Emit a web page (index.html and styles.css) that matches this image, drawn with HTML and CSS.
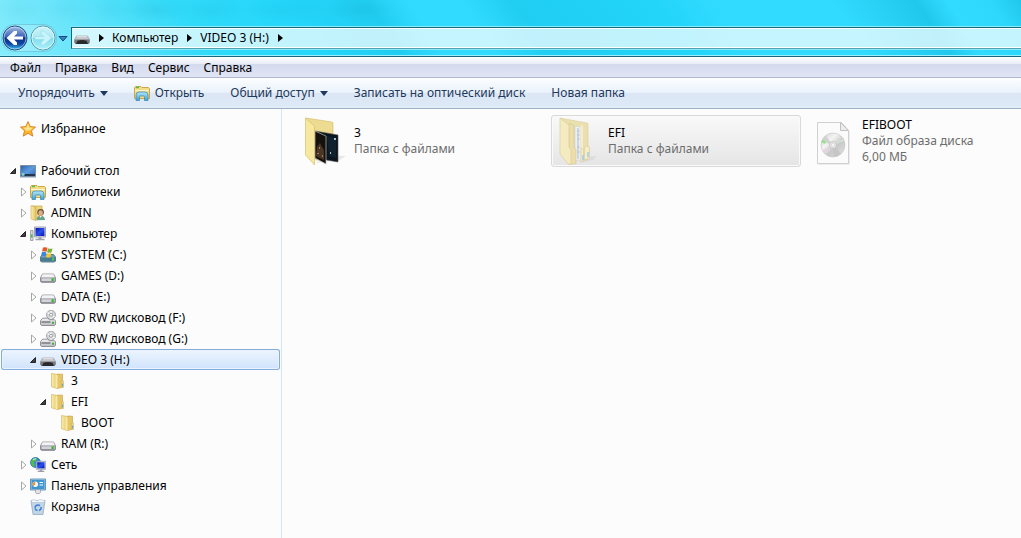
FILE: index.html
```html
<!DOCTYPE html>
<html lang="ru">
<head>
    <meta charset="UTF-8">
    <meta name="viewport" content="width=device-width, initial-scale=1.0">
    <title>VIDEO 3 (H:)</title>
    <link rel="stylesheet" href="styles.css">
</head>
<body>

    <svg class="sprite" aria-hidden="true">
        <defs>
            <linearGradient id="g-back" x1="0" y1="0" x2="0" y2="1">
                <stop offset="0" stop-color="#a9bfe6"/>
                <stop offset="0.45" stop-color="#3a62b8"/>
                <stop offset="0.5" stop-color="#0b2f86"/>
                <stop offset="0.75" stop-color="#0f48a8"/>
                <stop offset="1" stop-color="#35c8f4"/>
            </linearGradient>
            <linearGradient id="g-forward" x1="0" y1="0" x2="0" y2="1">
                <stop offset="0" stop-color="#d0f5fb"/>
                <stop offset="0.48" stop-color="#a9e8f4"/>
                <stop offset="0.52" stop-color="#80dcee"/>
                <stop offset="1" stop-color="#aef2fc"/>
            </linearGradient>
            <linearGradient id="g-folder" x1="0" y1="0" x2="1" y2="0">
                <stop offset="0" stop-color="#fbf0b4"/>
                <stop offset="1" stop-color="#e3c15c"/>
            </linearGradient>
            <linearGradient id="g-drive" x1="0" y1="0" x2="0" y2="1">
                <stop offset="0" stop-color="#f6f6f8"/>
                <stop offset="1" stop-color="#b9bac0"/>
            </linearGradient>
            <linearGradient id="g-blue" x1="0" y1="0" x2="1" y2="1">
                <stop offset="0" stop-color="#2a5ea8"/>
                <stop offset="0.5" stop-color="#5d9be0"/>
                <stop offset="1" stop-color="#2e68b5"/>
            </linearGradient>
            <linearGradient id="g-screen" x1="0" y1="0" x2="1" y2="1">
                <stop offset="0" stop-color="#0a12a0"/>
                <stop offset="0.5" stop-color="#2a50f0"/>
                <stop offset="1" stop-color="#0612a8"/>
            </linearGradient>
            <linearGradient id="g-tray" x1="0" y1="0" x2="0" y2="1">
                <stop offset="0" stop-color="#b5e6f8"/>
                <stop offset="1" stop-color="#3f9fd0"/>
            </linearGradient>
            <linearGradient id="g-disc" x1="0" y1="0" x2="1" y2="1">
                <stop offset="0" stop-color="#d0d0d0"/>
                <stop offset="0.35" stop-color="#f4f4f4"/>
                <stop offset="0.6" stop-color="#c8c8c8"/>
                <stop offset="1" stop-color="#e4e4e4"/>
            </linearGradient>
        </defs>

        <symbol id="i-star" viewBox="0 0 16 16">
            <path d="M8 .6l2.200 5 5.300.5-4 3.600 1.200 5.400L8 12.300l-4.700 2.800 1.200-5.400-4-3.600 5.300-.5z" fill="#fbb62c" stroke="#d97a1c" stroke-width=".9" stroke-linejoin="round"/>
            <path d="M8 2.600l1.600 3.800 3.800.4-3.400 2.400-4.600.9.4-1.400-2.900-2 3.600-.3z" fill="#ffe58a"/>
        </symbol>

        <symbol id="i-desktop" viewBox="0 0 16 16">
            <path d="M.5 2.500h15v11H.5z" fill="url(#g-blue)" stroke="#7c8ea6"/>
            <path d="M1 11h14v2H1z" fill="#26354e"/>
            <circle cx="3" cy="11.600" r="1.800" fill="#53b9e8"/>
            <path d="M2.400 10.600h1.400v1.200H2.400z" fill="#f4d34a"/>
            <path d="M0 14.500h16" stroke="#c8ced8"/>
        </symbol>

        <symbol id="i-library" viewBox="0 0 16 16">
            <path d="M.5 13.500V2.500L2 1.500h5l1 1h6.500l1 1v10z" fill="#f3dc85" stroke="#c9a84a"/>
            <path d="M1 5.500h14" stroke="#fdf6cc"/>
            <path d="M2 2.500h3" stroke="#4cc14a" stroke-width="1.400"/>
            <path d="M2 15.500V10Q2 7 5 7h6q3 0 3 3v5.500h-3.500v-3.500q0-1-1-1h-3q-1 0-1 1v3.500z" fill="url(#g-tray)" stroke="#3c90bd" stroke-width=".8"/>
        </symbol>

        <symbol id="i-user" viewBox="0 0 16 16">
            <path d="M1.500 1h10.500v12.500H1.500z" fill="#efd47e" stroke="#c9a850" stroke-width=".7"/>
            <path d="M1 .8l5 1.200v13.600l-5-1.600z" fill="url(#g-folder)" stroke="#c9a850" stroke-width=".6"/>
            <path d="M6.500 15.300q0-4.600 4-4.600t4.700 4.300z" fill="#6aa28c"/>
            <path d="M9.300 10.800l1.300 2 1.300-2z" fill="#f5f5f5"/>
            <circle cx="10.600" cy="7.200" r="3.300" fill="#66533c"/>
            <ellipse cx="10.600" cy="8" rx="2.200" ry="2.700" fill="#dcae88"/>
        </symbol>

        <symbol id="i-computer" viewBox="0 0 16 16">
            <path d="M.5 4.500h2.500v10H.5z" fill="#d5d8de" stroke="#868b96" stroke-width=".7"/>
            <path d="M1 8.500h1.500v3H1z" fill="#45b83f"/>
            <path d="M4.500 1h11v10h-11z" fill="#dfe2e8" stroke="#8a90a0" stroke-width=".8"/>
            <path d="M5.500 2h9v8h-9z" fill="url(#g-screen)"/>
            <path d="M8.500 11.300h3v1.500h3v1.500h-9v-1.500h3z" fill="#9da2ac"/>
        </symbol>

        <symbol id="i-drive" viewBox="0 0 16 16">
            <path d="M2.500 6h11l2 3.500v4l-1 1h-13l-1-1v-4z" fill="url(#g-drive)" stroke="#8a8b92" stroke-width=".8"/>
            <path d="M1 9.800h14v3.700H1z" fill="#d3d4da" stroke="#77787f" stroke-width=".7"/>
            <path d="M2.800 6.600h10.400l1.300 2.600h-13z" fill="#f3f3f6"/>
            <path d="M11.500 10.300h2.200v2.700h-2.200z" fill="#32b42c"/>
        </symbol>

        <symbol id="i-system" viewBox="0 0 16 16">
            <path d="M2.500 7.500h11l2 2.500v4l-1 1h-13l-1-1v-4z" fill="#6fa3b8" stroke="#3d6475" stroke-width=".8"/>
            <path d="M1 10.500h14v3.600H1z" fill="#4b7b90"/>
            <path d="M12 11h2v2.500h-2z" fill="#49d040"/>
            <path d="M3 .6q2.300-1 4.500.2L6.600 4.800q-2.200-1-4.500-.2z" fill="#e8562a"/>
            <path d="M8 1.200q2.300 1 4.500 0l-.9 4q-2.300 1-4.500 0z" fill="#72b83a"/>
            <path d="M1.900 5.200q2.300-1 4.500.2L5.500 9.400q-2.200-1-4.500-.2z" fill="#3b86d8"/>
            <path d="M6.900 5.900q2.300 1 4.500 0l-.9 4q-2.300 1-4.500 0z" fill="#f7c52d"/>
        </symbol>

        <symbol id="i-dvd" viewBox="0 0 16 16">
            <circle cx="11" cy="4.800" r="4.500" fill="#d3d6da" stroke="#888c92" stroke-width=".7"/>
            <path d="M11 .7v8.200M7.500 2.500l7 4.600" stroke="#f7f7f7" stroke-width="1.200"/>
            <circle cx="11" cy="4.800" r="1.500" fill="#fff" stroke="#777" stroke-width=".7"/>
            <path d="M2.500 8.200h5l2 1.500h5l1 1.300v3.500l-1 1h-13l-1-1v-3.700z" fill="url(#g-drive)" stroke="#7b7c82" stroke-width=".8"/>
            <path d="M1.500 12h9" stroke="#4c4d52"/>
            <path d="M12 11.700h2v2h-2z" fill="#32b42c"/>
        </symbol>

        <symbol id="i-removable" viewBox="0 0 16 16">
            <path d="M2.500 6h11l2 3.500v3H.5v-3z" fill="#c3c5ca" stroke="#94959b" stroke-width=".6"/>
            <path d="M.5 9.500h15v3.500l-1 1h-13l-1-1z" fill="#77787d"/>
            <path d="M3.500 10.800q4.500-1.600 9 0l1.500 3.200H2z" fill="#2a2a2d"/>
            <path d="M3 6.700h10" stroke="#e6e7ea"/>
        </symbol>

        <symbol id="i-folder" viewBox="0 0 16 16">
            <path d="M1.500.5l6 1v14l-6-1.700z" fill="url(#g-folder)" stroke="#cdae56" stroke-width=".6"/>
            <path d="M7.500 1l5 .2v13l-5 1.300z" fill="#e6c566" stroke="#c29e44" stroke-width=".6"/>
            <path d="M5.500 1.500l2.200.6v13.300l-2.200-.7z" fill="#f8e9a6"/>
            <path d="M11.500 8h2v6.500l-2-.5z" fill="#f3df95" stroke="#c7a54c" stroke-width=".5"/>
            <path d="M12.500 10.500v3" stroke="#54a9dc"/>
        </symbol>

        <symbol id="i-network" viewBox="0 0 16 16">
            <circle cx="5.500" cy="5.500" r="5" fill="#2c8bd4" stroke="#2467a6" stroke-width=".7"/>
            <path d="M2 2.500q3-2 5-1.500l-1 3-2.500 1L5 8l-1.500 2Q1 8 .9 5z" fill="#58bd45"/>
            <path d="M3 2.500l3-.8" stroke="#d6f4ff"/>
            <path d="M6.300 4.300h9.200v8H6.300z" fill="#e1e4ea" stroke="#8a90a0" stroke-width=".7"/>
            <path d="M7.200 5.200h7.400v6.200H7.200z" fill="url(#g-screen)"/>
            <path d="M9.700 12.500h2.600v1.200h2v1.300H7.700v-1.300h2z" fill="#9ba0aa"/>
        </symbol>

        <symbol id="i-control" viewBox="0 0 16 16">
            <path d="M.5 1h15v11H.5z" fill="#a9d0ea" stroke="#4685b4" stroke-width=".8"/>
            <path d="M1.500 2h13v9h-13z" fill="#3f94d2"/>
            <circle cx="5.300" cy="6.300" r="2.700" fill="#fff"/>
            <path d="M5.300 6.300V3.600A2.700 2.700 0 0 0 3.500 8.300z" fill="#f4902c"/>
            <path d="M9.500 4.500h3.500M9.500 7h3.500" stroke="#fff" stroke-width="1.200"/>
            <path d="M5.500 11.500h5v3l-1 1h-3l-1-1z" fill="#dfe3e8" stroke="#90969f" stroke-width=".7"/>
        </symbol>

        <symbol id="i-bin" viewBox="0 0 16 16">
            <path d="M1 1.500h14l-2 14H3z" fill="#c3d6e8" stroke="#93a9bd" stroke-width=".8"/>
            <path d="M1 1.500l3-1 3 1.200L10 .5l5 1-1 2H2z" fill="#f1f6fa" stroke="#a5b6c6" stroke-width=".5"/>
            <path d="M5 9a3 3 0 0 1 5-2.200M11 8a3 3 0 0 1-2 3.500M7.500 11.500A3 3 0 0 1 5 9.500" fill="none" stroke="#3c7fd2" stroke-width="1.500"/>
        </symbol>

        <symbol id="i-big-folder" viewBox="0 0 48 48">
            <path d="M13 46l24-3 6-4-20-1z" fill="#000" opacity=".08"/>
            <path d="M3 1l26 4q1 .2 1 1v36l-17 1z" fill="#ecdb90" stroke="#d4ba69" stroke-width=".6"/>
            <path d="M12 14l23 4v27l-23-4z" fill="#0b151d" stroke="#555" stroke-width=".6"/>
            <path d="M24 19l9 2v20l-7-2z" fill="#10222e"/>
            <path d="M31 21h2v2h-2zM27 35h1v2h-1z" fill="#a9c1ce"/>
            <path d="M12 14l11 5v28l-11-6z" fill="#14110d" stroke="#bbb" stroke-width=".7"/>
            <path d="M14 30l3-4 2 4 2 3v10l-8-4z" fill="#4a3626"/>
            <path d="M16 30h1v2h-1zM14 36h2v1h-2zM19 38h1v2h-1z" fill="#a27a4c"/>
            <path d="M2.500 1l9 8v39l-9-10z" fill="#f7e79f" stroke="#d8c06b" stroke-width=".7"/>
        </symbol>

        <symbol id="i-big-files" viewBox="0 0 48 48">
            <path d="M24 46l12-3 4-4-12 1z" fill="#000" opacity=".05"/>
            <path d="M3 1l27 5q1 .2 1 1v35l-7 2z" fill="#eadfae" stroke="#dccd9c" stroke-width=".6"/>
            <path d="M18 9l6 1v33l-6 1z" fill="#eceff2" stroke="#d3d3cd" stroke-width=".6"/>
            <path d="M21 11v31" stroke="#cdd6e0" stroke-width="2"/>
            <path d="M20 14h3M20 18h3M20 22h3M20 30h3M20 35h3" stroke="#a9b8c8" stroke-width=".6"/>
            <path d="M24 8l2 .5v35l-2 1z" fill="#f6edc8"/>
            <path d="M12 6l5 2.500v22l2 2v14l-7 1z" fill="#ebdeaa" stroke="#d6c690" stroke-width=".6"/>
            <path d="M24 31l2.500 1v12l-2.500 1zM29 29l3.500 1v11l-5 2V31z" fill="#f5ecc8" stroke="#d8c998" stroke-width=".6"/>
            <path d="M26 38v5M31 35v5" stroke="#9fcbee" stroke-width="1.500"/>
            <path d="M3 1l9 7v22l2 3v14h-3L3 37z" fill="#f5ebc0" stroke="#dccd98" stroke-width=".7"/>
        </symbol>

        <symbol id="i-big-disc" viewBox="0 0 48 48">
            <path d="M7.500 6.500h24l7 8v33h-31z" fill="#bbb" opacity=".5"/>
            <path d="M6.500 5.500h24l7 8v33h-31z" fill="#fbfbfb" stroke="#d0d0d0"/>
            <path d="M29.500 5.500v8h8z" fill="#ececec" stroke="#c2c2c2"/>
            <circle cx="22" cy="28" r="12" fill="url(#g-disc)" stroke="#c2c2c2" stroke-width=".6"/>
            <path d="M22 28L10.500 24.500a12 12 0 0 1 4-6z" fill="#d2d2d2"/>
            <path d="M14 27l-3.500-1.500.8-3 3.500 2z" fill="#9ae092"/>
            <path d="M22 28l-9 7-1-1.500z" fill="#e9cbe4"/>
            <path d="M22 28l10-6 1 2z" fill="#d0e4d6"/>
            <path d="M22 28l8 8.500a12 12 0 0 1-7 3.500z" fill="#c6c6c6"/>
            <circle cx="22" cy="28" r="3.500" fill="#e9e9e9" stroke="#b9b9b9" stroke-width=".7"/>
            <circle cx="22" cy="28" r="1.500" fill="#fff" stroke="#c5c5c5" stroke-width=".5"/>
        </symbol>

        <symbol id="i-open" viewBox="0 0 8 8">
            <path d="M6.500 1.500v5h-5z" fill="#404040" stroke="#262626"/>
        </symbol>

        <symbol id="i-closed" viewBox="0 0 8 10">
            <path d="M2.500 1v8L7 5z" fill="#fff" stroke="#a6a6a6"/>
        </symbol>

        <symbol id="i-crumb" viewBox="0 0 8 8">
            <path d="M2 0l5 4-5 4z" fill="#000"/>
        </symbol>

        <symbol id="i-down" viewBox="0 0 8 8">
            <path d="M0 2h8L4 7z" fill="#1e395b"/>
        </symbol>
    </svg>

    <header class="titlebar">
        <div class="travel">
            <button class="nav-button" aria-label="Назад">
                <svg viewBox="0 0 28 28">
                    <circle cx="14" cy="14" r="12" fill="url(#g-back)" stroke="#1c4c80"/>
                    <circle cx="14" cy="14" r="11" fill="none" stroke="#dbe8f8" stroke-opacity=".6"/>
                    <path d="M5.500 14l7.500-7h3v2.500L13 12.500h9v3h-9l3 3V21h-3z" fill="#fff"/>
                </svg>
            </button>
            <button class="nav-button" aria-label="Вперед">
                <svg viewBox="0 0 28 28">
                    <circle cx="14" cy="14" r="12" fill="url(#g-forward)" stroke="#5596a8"/>
                    <circle cx="14" cy="14" r="11" fill="none" stroke="#e4fbff" stroke-opacity=".8"/>
                    <path d="M22.500 14L15 7h-3v2.500l3 3H6v3h9l-3 3V21h3z" fill="#c8f4fb" stroke="#8fd8e6" stroke-width=".5"/>
                </svg>
            </button>
        </div>
        <button class="history" aria-label="Последние страницы">
            <svg viewBox="0 0 10 8"><path d="M1 2.500h8L5 7z" fill="#3a80bb" stroke="#154a86"/></svg>
        </button>
        <nav class="address">
            <svg class="icon"><use href="#i-removable"/></svg>
            <svg class="arrow"><use href="#i-crumb"/></svg>
            <a href="#">Компьютер</a>
            <svg class="arrow"><use href="#i-crumb"/></svg>
            <a href="#">VIDEO 3 (H:)</a>
            <svg class="arrow"><use href="#i-crumb"/></svg>
        </nav>
    </header>

    <div class="menu">
        <button>Файл</button>
        <button>Правка</button>
        <button>Вид</button>
        <button>Сервис</button>
        <button>Справка</button>
    </div>

    <div class="toolbar">
        <button>Упорядочить <svg class="arrow"><use href="#i-down"/></svg></button>
        <button><svg class="icon"><use href="#i-library"/></svg> Открыть</button>
        <button>Общий доступ <svg class="arrow"><use href="#i-down"/></svg></button>
        <button>Записать на оптический диск</button>
        <button>Новая папка</button>
    </div>

    <div class="content">
        <nav class="sidebar">
            <ul class="tree favorites">
                <li><div class="row"><span class="arrow"></span><svg class="icon"><use href="#i-star"/></svg><a href="#">Избранное</a></div></li>
            </ul>
            <ul class="tree">
                <li>
                    <div class="row"><button class="toggle" aria-label="Свернуть"><svg class="arrow"><use href="#i-open"/></svg></button><svg class="icon"><use href="#i-desktop"/></svg><a href="#">Рабочий стол</a></div>
                    <ul>
                        <li><div class="row"><button class="toggle" aria-label="Развернуть"><svg class="arrow"><use href="#i-closed"/></svg></button><svg class="icon"><use href="#i-library"/></svg><a href="#">Библиотеки</a></div></li>
                        <li><div class="row"><button class="toggle" aria-label="Развернуть"><svg class="arrow"><use href="#i-closed"/></svg></button><svg class="icon"><use href="#i-user"/></svg><a href="#">ADMIN</a></div></li>
                        <li>
                            <div class="row"><button class="toggle" aria-label="Свернуть"><svg class="arrow"><use href="#i-open"/></svg></button><svg class="icon"><use href="#i-computer"/></svg><a href="#">Компьютер</a></div>
                            <ul>
                                <li><div class="row"><button class="toggle" aria-label="Развернуть"><svg class="arrow"><use href="#i-closed"/></svg></button><svg class="icon"><use href="#i-system"/></svg><a href="#">SYSTEM (C:)</a></div></li>
                                <li><div class="row"><button class="toggle" aria-label="Развернуть"><svg class="arrow"><use href="#i-closed"/></svg></button><svg class="icon"><use href="#i-drive"/></svg><a href="#">GAMES (D:)</a></div></li>
                                <li><div class="row"><button class="toggle" aria-label="Развернуть"><svg class="arrow"><use href="#i-closed"/></svg></button><svg class="icon"><use href="#i-drive"/></svg><a href="#">DATA (E:)</a></div></li>
                                <li><div class="row"><button class="toggle" aria-label="Развернуть"><svg class="arrow"><use href="#i-closed"/></svg></button><svg class="icon"><use href="#i-dvd"/></svg><a href="#">DVD RW дисковод (F:)</a></div></li>
                                <li><div class="row"><button class="toggle" aria-label="Развернуть"><svg class="arrow"><use href="#i-closed"/></svg></button><svg class="icon"><use href="#i-dvd"/></svg><a href="#">DVD RW дисковод (G:)</a></div></li>
                                <li>
                                    <div class="row selected"><button class="toggle" aria-label="Свернуть"><svg class="arrow"><use href="#i-open"/></svg></button><svg class="icon"><use href="#i-removable"/></svg><a href="#">VIDEO 3 (H:)</a></div>
                                    <ul>
                                        <li><div class="row"><span class="arrow"></span><svg class="icon"><use href="#i-folder"/></svg><a href="#">3</a></div></li>
                                        <li>
                                            <div class="row"><button class="toggle" aria-label="Свернуть"><svg class="arrow"><use href="#i-open"/></svg></button><svg class="icon"><use href="#i-folder"/></svg><a href="#">EFI</a></div>
                                            <ul>
                                                <li><div class="row"><span class="arrow"></span><svg class="icon"><use href="#i-folder"/></svg><a href="#">BOOT</a></div></li>
                                            </ul>
                                        </li>
                                    </ul>
                                </li>
                                <li><div class="row"><button class="toggle" aria-label="Развернуть"><svg class="arrow"><use href="#i-closed"/></svg></button><svg class="icon"><use href="#i-drive"/></svg><a href="#">RAM (R:)</a></div></li>
                            </ul>
                        </li>
                        <li><div class="row"><button class="toggle" aria-label="Развернуть"><svg class="arrow"><use href="#i-closed"/></svg></button><svg class="icon"><use href="#i-network"/></svg><a href="#">Сеть</a></div></li>
                        <li><div class="row"><button class="toggle" aria-label="Развернуть"><svg class="arrow"><use href="#i-closed"/></svg></button><svg class="icon"><use href="#i-control"/></svg><a href="#">Панель управления</a></div></li>
                        <li><div class="row"><span class="arrow"></span><svg class="icon"><use href="#i-bin"/></svg><a href="#">Корзина</a></div></li>
                    </ul>
                </li>
            </ul>
        </nav>

        <main class="files">
            <a class="file" href="#">
                <svg class="thumb"><use href="#i-big-folder"/></svg>
                <span class="info">
                    <span class="name">3</span>
                    <span>Папка с файлами</span>
                </span>
            </a>
            <a class="file active" href="#">
                <svg class="thumb"><use href="#i-big-files"/></svg>
                <span class="info">
                    <span class="name">EFI</span>
                    <span>Папка с файлами</span>
                </span>
            </a>
            <a class="file" href="#">
                <svg class="thumb"><use href="#i-big-disc"/></svg>
                <span class="info">
                    <span class="name">EFIBOOT</span>
                    <span>Файл образа диска</span>
                    <span>6,00 МБ</span>
                </span>
            </a>
        </main>
    </div>

</body>
</html>
```
FILE: styles.css
```css
* {
    box-sizing: border-box;
}
body {
    margin: 0;
    min-height: 100vh;
    display: flex;
    flex-direction: column;
    overflow-x: hidden;
    background: #fcfcfc;
    color: #000;
    font-family: "Noto Sans", "Open Sans", sans-serif;
    font-size: 12px;
    line-height: 16px;
}
a {
    color: inherit;
    text-decoration: none;
    white-space: nowrap;
}
button {
    margin: 0;
    padding: 0;
    border: 0;
    background: none;
    color: inherit;
    font: inherit;
    white-space: nowrap;
}
ul {
    margin: 0;
    padding: 0;
    list-style: none;
}
.sprite {
    position: absolute;
    width: 0;
    height: 0;
}
.icon {
    width: 16px;
    height: 16px;
    flex: none;
}
.arrow {
    display: block;
    width: 8px;
    height: 8px;
    flex: none;
}

/* title bar */
.titlebar {
    display: flex;
    align-items: center;
    height: 57px;
    padding: 20px 0 0 1px;
    border-bottom: 1px solid #14697d;
    box-shadow: inset 0 -1px #9beefb;
    background:
        radial-gradient(ellipse 24px 12px at 20px 10px, rgba(0, 130, 160, 0.05), transparent),
        radial-gradient(ellipse 28px 12px at 66px 10px, rgba(0, 130, 160, 0.05), transparent),
        radial-gradient(ellipse 20px 12px at 110px 10px, rgba(0, 130, 160, 0.05), transparent),
        radial-gradient(ellipse 34px 12px at 154px 10px, rgba(0, 130, 160, 0.1), transparent),
        radial-gradient(ellipse 34px 12px at 212px 10px, rgba(0, 130, 160, 0.08), transparent),
        radial-gradient(ellipse 48px 12px at 286px 10px, rgba(0, 130, 160, 0.08), transparent),
        radial-gradient(ellipse 34px 12px at 360px 10px, rgba(0, 130, 160, 0.1), transparent),
        linear-gradient(57deg, #86ecfc 0%, #6be5fb 8%, #30daf9 20%, #25d7fb 30%, #20cdf0 38%, #31dbff 42%, #31dbff 47%, #20cef2 52%, #22d5f9 65%, #31dbff 71%, #31dbff 82%, #20c9ec 90%, #31dbff 93%, #2dd8fc 97%, #1fc8eb 100%);
}
.travel {
    display: flex;
    border-radius: 14px;
    background: rgba(255, 255, 255, 0.2);
    box-shadow: inset 0 0 0 1px rgba(40, 130, 155, 0.3);
}
.nav-button {
    width: 28px;
    height: 28px;
}
.nav-button svg,
.history svg {
    display: block;
    width: 100%;
    height: 100%;
}
.history {
    width: 10px;
    height: 8px;
    margin: 0 3px 0 1px;
}
.address {
    flex: 1;
    display: flex;
    align-items: center;
    gap: 7px;
    height: 22px;
    padding-left: 2px;
    border: solid #14697d;
    border-width: 1px 0 1px 1px;
    border-bottom-color: #4fa3b3;
    box-shadow: inset 0 1px #fff, inset 0 -1px #fff, 0 -1px #8beafa, 0 1px #8beafa;
    background: rgba(255, 255, 255, 0.72);
}

/* menu and toolbar */
.menu {
    display: flex;
    height: 21px;
    padding: 1px 0 0 3px;
    border-bottom: 1px solid #b1b7d0;
    background: linear-gradient(#fff 0, #e8ebf6 7px, #d4daed 7px, #e1e6f6 100%);
}
.menu button {
    padding: 0 7px;
}
.toolbar {
    display: flex;
    height: 31px;
    padding-left: 5px;
    border-bottom: 1px solid #a0afc9;
    background: linear-gradient(#fdfeff 0, #e8f1fb 15px, #dce6f4 15px, #dde9f7 28px, #e4eff8 30px);
    color: #1e395b;
}
.toolbar button {
    display: flex;
    align-items: center;
    gap: 5px;
    padding: 0 13px;
}

/* folder tree */
.content {
    flex: 1;
    display: flex;
}
.sidebar {
    flex: none;
    width: 282px;
    padding: 9px 1px 0;
    border-right: 1px solid #d6e5f5;
}
.favorites {
    margin-bottom: 21px;
}
.row {
    display: flex;
    align-items: center;
    height: 21px;
    padding-left: 8px;
}
.toggle .arrow {
    height: 10px;
}
.row .icon {
    margin: 0 5px 0 3px;
}
.tree ul .row {
    padding-left: 18px;
}
.tree ul ul .row {
    padding-left: 28px;
}
.tree ul ul ul .row {
    padding-left: 38px;
}
.tree ul ul ul ul .row {
    padding-left: 48px;
}
.row.selected {
    border-radius: 3px;
    background: linear-gradient(#eef5fe, #cfe3fc);
    box-shadow: inset 0 0 0 1px #84acdd, inset 0 0 0 2px #e9f3fe;
}

/* file tiles */
.files {
    flex: 1;
    min-width: 0;
    display: flex;
    align-items: flex-start;
    gap: 4px;
    padding: 6px 0 0 15px;
    overflow: hidden;
}
.file {
    flex: none;
    display: flex;
    align-items: center;
    gap: 3px;
    width: 250px;
    height: 52px;
    padding: 0 5px;
    border: 1px solid transparent;
    border-radius: 3px;
}
.file.active {
    border-color: #d9d9d9;
    background: linear-gradient(#f9f9f9, #e5e5e5);
    box-shadow: inset 0 0 0 1px #fafafa;
}
.thumb {
    width: 48px;
    height: 48px;
    flex: none;
}
.info {
    display: flex;
    flex-direction: column;
    color: #6d6d6d;
}
.name {
    color: #000;
}
```
